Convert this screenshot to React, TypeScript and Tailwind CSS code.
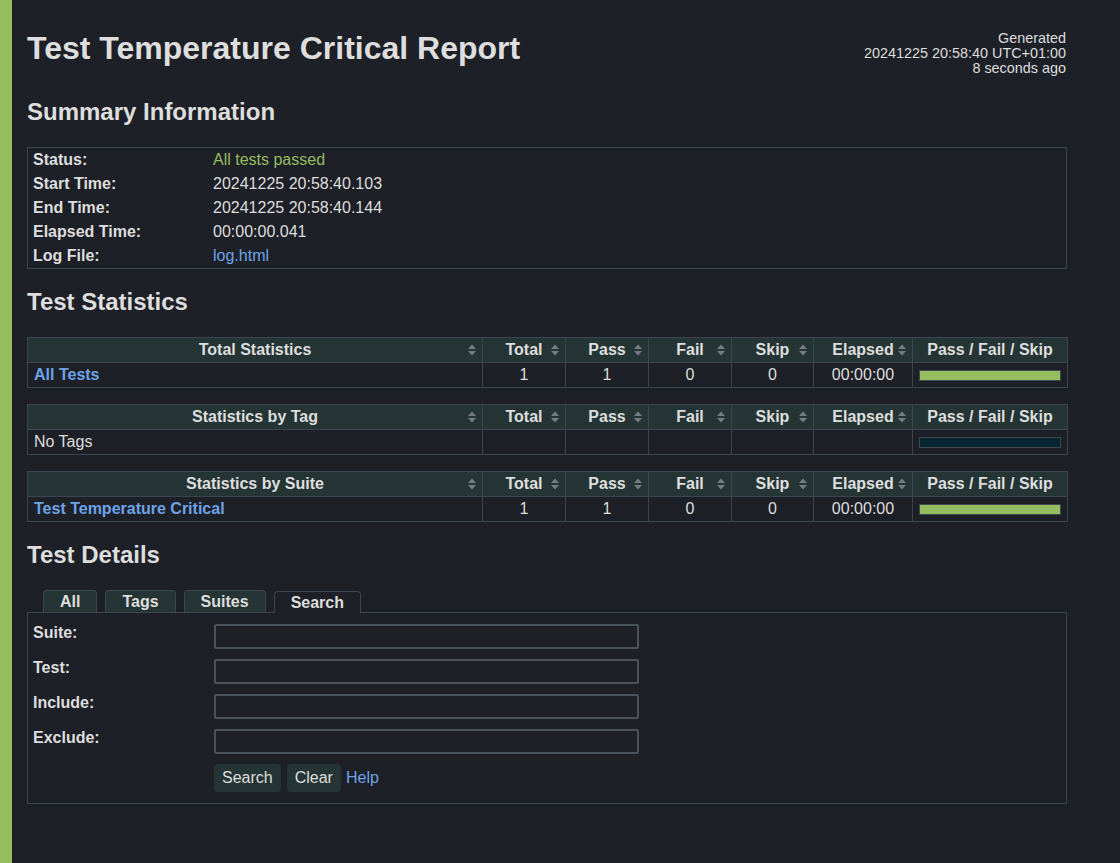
const BG = "bg-[#1d2027]";

type Row = {
  name: string;
  link?: boolean;
  total?: string;
  pass?: string;
  fail?: string;
  skip?: string;
  elapsed?: string;
  bar: "pass" | "empty";
};

const TABLES: { title: string; row: Row }[] = [
  {
    title: "Total Statistics",
    row: { name: "All Tests", link: true, total: "1", pass: "1", fail: "0", skip: "0", elapsed: "00:00:00", bar: "pass" },
  },
  { title: "Statistics by Tag", row: { name: "No Tags", bar: "empty" } },
  {
    title: "Statistics by Suite",
    row: { name: "Test Temperature Critical", link: true, total: "1", pass: "1", fail: "0", skip: "0", elapsed: "00:00:00", bar: "pass" },
  },
];

function SortIcon() {
  return (
    <svg
      width="8"
      height="12"
      viewBox="0 0 8 12"
      className="absolute right-[6px] top-1/2 -translate-y-1/2"
    >
      <polygon points="0,5 4,0.5 8,5" fill="#767c84" />
      <polygon points="0,7 4,11.5 8,7" fill="#767c84" />
    </svg>
  );
}

function StatTable({ title, row }: { title: string; row: Row }) {
  const th = "relative h-[25px] border border-[#3c4650] bg-[#253535] p-0 text-center font-bold";
  const td = "h-[23px] border border-[#3c4650] px-[6px] py-0 text-center";
  return (
    <table className="w-full table-fixed border-collapse border border-[#3c4650]">
      <colgroup>
        <col className="w-[455px]" />
        <col className="w-[83px]" />
        <col className="w-[83px]" />
        <col className="w-[83px]" />
        <col className="w-[82px]" />
        <col className="w-[99px]" />
        <col className="w-[155px]" />
      </colgroup>
      <thead>
        <tr>
          <th className={th}>
            {title}
            <SortIcon />
          </th>
          {["Total", "Pass", "Fail", "Skip", "Elapsed"].map((h) => (
            <th key={h} className={th}>
              {h}
              <SortIcon />
            </th>
          ))}
          <th className={th}>Pass / Fail / Skip</th>
        </tr>
      </thead>
      <tbody>
        <tr>
          <td className="h-[23px] border border-[#3c4650] px-[6px] py-0 text-left">
            {row.link ? (
              <span className="font-bold text-[#6ea3e8]">{row.name}</span>
            ) : (
              row.name
            )}
          </td>
          <td className={td}>{row.total}</td>
          <td className={td}>{row.pass}</td>
          <td className={td}>{row.fail}</td>
          <td className={td}>{row.skip}</td>
          <td className={td}>{row.elapsed}</td>
          <td className={td}>
            <div
              className={
                row.bar === "pass"
                  ? "h-[11px] border border-[#3c4a50] bg-[#97bd61]"
                  : "h-[11px] border border-[#3c4a50] bg-[#062632]"
              }
            />
          </td>
        </tr>
      </tbody>
    </table>
  );
}

export default function App() {
  const summary: [string, React.ReactNode][] = [
    ["Status:", <span className="text-[#97bd61]">All tests passed</span>],
    ["Start Time:", "20241225 20:58:40.103"],
    ["End Time:", "20241225 20:58:40.144"],
    ["Elapsed Time:", "00:00:00.041"],
    ["Log File:", <span className="text-[#6ea3e8]">log.html</span>],
  ];

  return (
    <div
      className={`min-h-screen ${BG} border-l-[12px] border-[#97bd61] font-['Liberation_Sans',Arial,sans-serif] text-[16px] text-[#dedede]`}
    >
      <div className="ml-[15px] w-[1040px] pt-[28px] pb-[60px]">
        <div className="flex items-start justify-between">
          <h1 className="text-[32px] font-bold leading-[40px]">Test Temperature Critical Report</h1>
          <div className="mt-[3px] mr-[1px] text-right text-[14.4px] leading-[15px]">
            <div>Generated</div>
            <div>20241225 20:58:40 UTC+01:00</div>
            <div>8 seconds ago</div>
          </div>
        </div>

        <h2 className="mt-[21px] text-[24px] font-bold leading-[30px]">Summary Information</h2>
        <div className="mt-[20px] border border-[#3c4650]">
          {summary.map(([label, value]) => (
            <div key={label} className="flex h-[24px] items-center">
              <div className="w-[185px] pl-[5px] font-bold">{label}</div>
              <div>{value}</div>
            </div>
          ))}
        </div>

        <h2 className="mt-[18px] text-[24px] font-bold leading-[30px]">Test Statistics</h2>
        <div className="mt-[20px] flex flex-col gap-[16px]">
          {TABLES.map((t) => (
            <StatTable key={t.title} title={t.title} row={t.row} />
          ))}
        </div>

        <h2 className="mt-[18px] text-[24px] font-bold leading-[30px]">Test Details</h2>
        <div className="mt-[20px] flex items-end gap-2 pl-4">
          {["All", "Tags", "Suites"].map((t) => (
            <div
              key={t}
              className="h-[22px] rounded-t-[4px] border border-b-0 border-[#3c4650] bg-[#253535] px-4 font-bold leading-[21px]"
            >
              {t}
            </div>
          ))}
          <div
            className={`relative z-10 -mb-px h-[22px] rounded-t-[4px] border border-b-0 border-[#3c4650] ${BG} px-4 font-bold leading-[22px]`}
          >
            Search
          </div>
        </div>
        <div className="border border-[#3c4650] pt-[11px] pb-[11px]">
          {["Suite:", "Test:", "Include:", "Exclude:"].map((label) => (
            <div key={label} className="mb-[10px] flex items-start">
              <div className="w-[186px] pl-[5px] font-bold leading-[18px]">{label}</div>
              <div className={`h-[25px] w-[425px] rounded-[2px] border-2 border-[#4a535c] ${BG}`} />
            </div>
          ))}
          <div className="flex items-center pl-[186px]">
            <button className="h-[28px] rounded-[4px] bg-[#253535] px-2 text-[#dedede]">Search</button>
            <button className="ml-[6px] h-[28px] rounded-[4px] bg-[#253535] px-2 text-[#dedede]">Clear</button>
            <span className="ml-[5px] text-[#6ea3e8]">Help</span>
          </div>
        </div>
      </div>
    </div>
  );
}
